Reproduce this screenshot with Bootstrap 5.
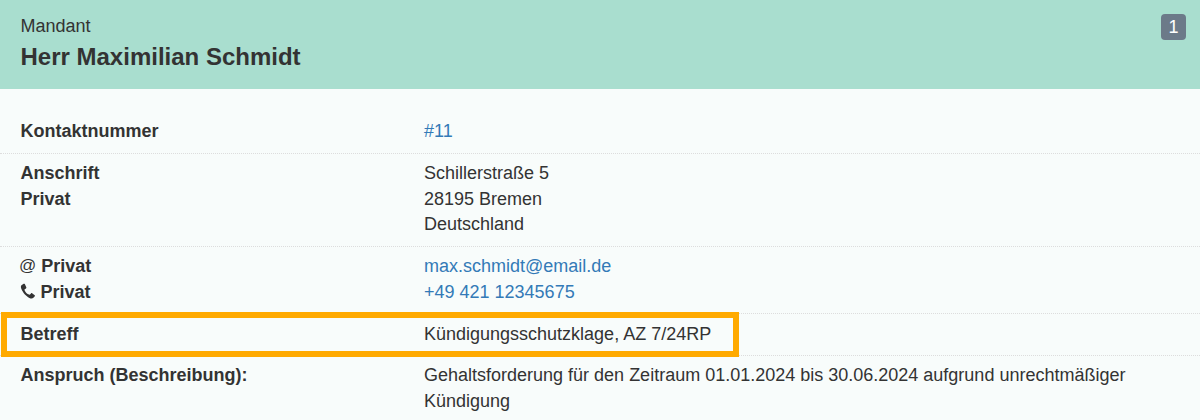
<!DOCTYPE html>
<html lang="de">
<head>
    <meta charset="UTF-8">
    <title>Mandant</title>
    <link href="https://cdn.jsdelivr.net/npm/bootstrap@5.3.0/dist/css/bootstrap.min.css" rel="stylesheet">
    <style>
        body { background: #f8fcfb; color: #333; font-family: "Liberation Sans", Arial, sans-serif; font-size: 18px; line-height: 25.714px; overflow: hidden; }
        a { color: #337ab7; text-decoration: none; }
        .head-box { background: #a9decf; height: 89px; padding: 13px 20.5px 0; }
        .head-sub { line-height: 26px; }
        .head-name { font-size: 24px; font-weight: 700; line-height: 36px; margin: 0; }
        .head-num { top: 14px; right: 14px; width: 25px; height: 26px; background: #6c7a89; border-radius: 4px; color: #fff; font-size: 18px; line-height: 26px; text-align: center; }
        .info-list { padding-top: 23.1px; }
        .info-row { padding: 7.2px 20.5px 7.8px; border-bottom: 1px dotted #ddd; }
        .info-row:last-child { border-bottom: 0; }
        .info-label { width: 403.5px; flex: none; font-weight: 700; }
        .info-value { flex: 1; padding-right: 40px; }
        .row-mark { top: -2.3px; left: 1px; width: 738px; height: 45px; border: 6px solid #fa0; pointer-events: none; }
        .at-ico { font-size: 17px; font-weight: 400; line-height: 1; vertical-align: 1px; margin-left: -1.5px; }
        .phone-ico { width: 16px; height: 16px; vertical-align: -1px; margin-left: -1px; fill: #333; }
    </style>
</head>
<body>
    <div class="head-box position-relative">
        <div class="head-sub">Mandant</div>
        <h1 class="head-name">Herr Maximilian Schmidt</h1>
        <div class="head-num position-absolute">1</div>
    </div>

    <div class="info-list">
        <div class="info-row d-flex">
            <div class="info-label">Kontaktnummer</div>
            <div class="info-value"><a href="#">#11</a></div>
        </div>
        <div class="info-row d-flex">
            <div class="info-label">Anschrift<br>Privat</div>
            <div class="info-value">Schillerstraße 5<br>28195 Bremen<br>Deutschland</div>
        </div>
        <div class="info-row d-flex">
            <div class="info-label"><span class="at-ico">@</span> Privat<br>
                <svg class="phone-ico" viewBox="0 0 16 16"><path d="M3.6 0.8 1.5 2.2C0.7 2.8 0.7 4.3 1.4 6c1.3 3.4 4.8 7.4 8 8.9 1.7.8 3 .8 4-.1l1.4-1.5c.3-.3.3-.8-.1-1.1l-2.6-1.9c-.4-.3-.8-.2-1.1.1l-1 1c-.3.3-.7.3-1 .1C7.300 11.500 5.200 8.900 4.500 7.100c-.1-.4 0-.7.3-.9l1.200-.8c.4-.3.5-.7.3-1.100L4.800 1.100C4.500.6 4 .5 3.600.8z"/></svg> Privat</div>
            <div class="info-value"><a href="#">max.schmidt@email.de</a><br><a href="#">+49 421 12345675</a></div>
        </div>
        <div class="info-row d-flex position-relative">
            <div class="info-label">Betreff</div>
            <div class="info-value">Kündigungsschutzklage, AZ 7/24RP</div>
            <div class="row-mark position-absolute"></div>
        </div>
        <div class="info-row d-flex">
            <div class="info-label">Anspruch (Beschreibung):</div>
            <div class="info-value">Gehaltsforderung für den Zeitraum 01.01.2024 bis 30.06.2024 aufgrund unrechtmäßiger Kündigung</div>
        </div>
    </div>
    <script src="https://cdn.jsdelivr.net/npm/bootstrap@5.3.0/dist/js/bootstrap.bundle.min.js"></script>
</body>
</html>
